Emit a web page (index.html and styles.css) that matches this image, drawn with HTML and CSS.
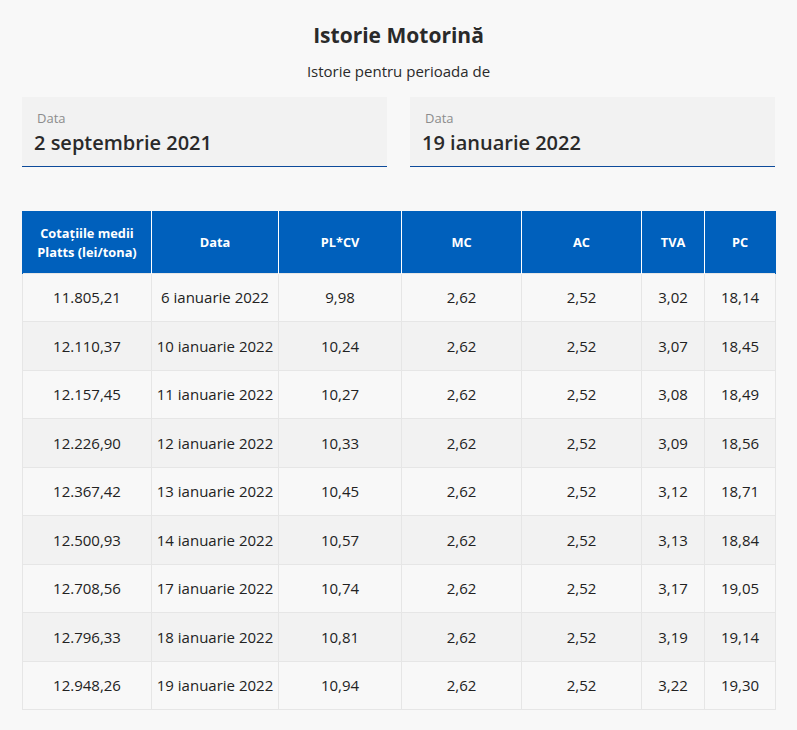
FILE: index.html
```html
<!DOCTYPE html>
<html lang="ro">
<head>
<meta charset="utf-8">
<link rel="stylesheet" href="styles.css">
</head>
<body>
<div class="page">
  <h1 class="title">Istorie Motorină</h1>
  <p class="subtitle">Istorie pentru perioada de</p>
  <div class="dates">
    <div class="field"><span class="label">Data</span><span class="value">2 septembrie 2021</span></div>
    <div class="field"><span class="label">Data</span><span class="value">19 ianuarie 2022</span></div>
  </div>
  <table class="prices">
    <colgroup>
      <col class="c1"><col class="c2"><col class="c3"><col class="c4"><col class="c5"><col class="c6"><col class="c7">
    </colgroup>
    <thead>
      <tr><th>Cotațiile medii<br>Platts (lei/tona)</th><th>Data</th><th>PL*CV</th><th>MC</th><th>AC</th><th>TVA</th><th>PC</th></tr>
    </thead>
    <tbody>
      <tr><td>11.805,21</td><td>6 ianuarie 2022</td><td>9,98</td><td>2,62</td><td>2,52</td><td>3,02</td><td>18,14</td></tr>
      <tr><td>12.110,37</td><td>10 ianuarie 2022</td><td>10,24</td><td>2,62</td><td>2,52</td><td>3,07</td><td>18,45</td></tr>
      <tr><td>12.157,45</td><td>11 ianuarie 2022</td><td>10,27</td><td>2,62</td><td>2,52</td><td>3,08</td><td>18,49</td></tr>
      <tr><td>12.226,90</td><td>12 ianuarie 2022</td><td>10,33</td><td>2,62</td><td>2,52</td><td>3,09</td><td>18,56</td></tr>
      <tr><td>12.367,42</td><td>13 ianuarie 2022</td><td>10,45</td><td>2,62</td><td>2,52</td><td>3,12</td><td>18,71</td></tr>
      <tr><td>12.500,93</td><td>14 ianuarie 2022</td><td>10,57</td><td>2,62</td><td>2,52</td><td>3,13</td><td>18,84</td></tr>
      <tr><td>12.708,56</td><td>17 ianuarie 2022</td><td>10,74</td><td>2,62</td><td>2,52</td><td>3,17</td><td>19,05</td></tr>
      <tr><td>12.796,33</td><td>18 ianuarie 2022</td><td>10,81</td><td>2,62</td><td>2,52</td><td>3,19</td><td>19,14</td></tr>
      <tr><td>12.948,26</td><td>19 ianuarie 2022</td><td>10,94</td><td>2,62</td><td>2,52</td><td>3,22</td><td>19,30</td></tr>
    </tbody>
  </table>
</div>
</body>
</html>
```
FILE: styles.css
```css
html, body {
  margin: 0;
  padding: 0;
  background: #f8f8f8;
}
body {
  font-family: "Open Sans", "Noto Sans", sans-serif;
  color: #222;
}
.page {
  padding: 20px 22px 20px 22px;
}
.title {
  margin: 0;
  text-align: center;
  font-size: 21px;
  font-weight: 700;
  line-height: 30px;
  color: #2a2a2a;
}
.subtitle {
  margin: 11px 0 0;
  text-align: center;
  font-size: 15px;
  line-height: 21px;
  color: #2a2a2a;
}
.dates {
  display: flex;
  gap: 23px;
  margin-top: 15px;
}
.field {
  flex: 1;
  display: flex;
  flex-direction: column;
  background: #f2f2f2;
  border-bottom: 1px solid #0d4a9a;
  height: 70px;
  box-sizing: border-box;
  padding: 12px 12px 0 12px;
}
.label {
  font-size: 13px;
  line-height: 18px;
  color: #8c8c8c;
  padding-left: 3px;
}
.value {
  font-size: 20px;
  font-weight: 600;
  line-height: 28px;
  color: #2a2a2a;
  margin-top: 2px;
}
.prices {
  margin-top: 44px;
  width: 753px;
  border-collapse: collapse;
  table-layout: fixed;
  font-size: 15px;
}
.c1 { width: 129px; }
.c2 { width: 127px; }
.c3 { width: 123px; }
.c4 { width: 120px; }
.c5 { width: 120px; }
.c6 { width: 63px; }
.c7 { width: 71px; }
.prices th {
  background: #0060bc;
  color: #fff;
  font-size: 12.8px;
  font-weight: 700;
  line-height: 19px;
  height: 62px;
  padding: 2px 4px 0;
  border-left: 1px solid #fff;
  border-right: 1px solid #fff;
  box-sizing: border-box;
}
.prices th:first-child { border-left: 1px solid #0060bc; }
.prices th:last-child { border-right: 1px solid #0060bc; }
.prices td {
  text-align: center;
  height: 48.5px;
  padding: 0 2px;
  border: 1px solid #e6e6e6;
  line-height: 20px;
  color: #222;
  box-sizing: border-box;
  white-space: nowrap;
}
.prices tbody tr:nth-child(odd) td { background: #f8f8f8; }
.prices tbody tr:nth-child(even) td { background: #f2f2f2; }
```
